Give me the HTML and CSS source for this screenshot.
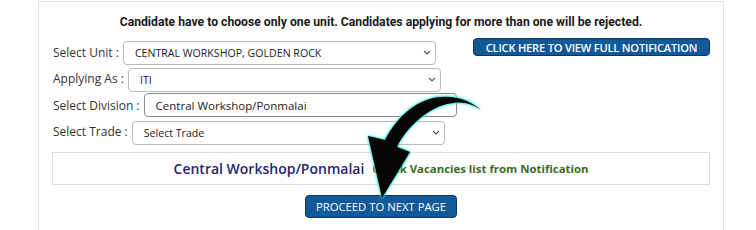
FILE: index.html
```html
<!DOCTYPE html>
<html lang="en">
<head>
    <meta charset="UTF-8">
    <meta name="viewport" content="width=device-width, initial-scale=1.0">
    <title>Apprentice Application - Unit Selection</title>
    <link rel="stylesheet" href="styles.css">
</head>
<body>
    <div class="card">
        <p class="warn">Candidate have to choose only one unit. Candidates applying for more than one will be rejected.</p>

        <div class="top">
            <div class="fields">
                <div class="row">
                    <label for="unit">Select Unit :</label>
                    <span class="sel">
                        <select id="unit" class="ctl">
                            <option>CENTRAL WORKSHOP, GOLDEN ROCK</option>
                        </select>
                        <svg class="chev" viewBox="0 0 8 5" width="8" height="5"><path d="M1 1 L4 4 L7 1" /></svg>
                    </span>
                </div>
                <div class="row">
                    <label for="applying">Applying As :</label>
                    <span class="sel">
                        <select id="applying" class="ctl">
                            <option>ITI</option>
                        </select>
                        <svg class="chev" viewBox="0 0 8 5" width="8" height="5"><path d="M1 1 L4 4 L7 1" /></svg>
                    </span>
                </div>
                <div class="row">
                    <label for="division">Select Division :</label>
                    <input id="division" class="ctl ctl-text" type="text" value="Central Workshop/Ponmalai">
                </div>
                <div class="row">
                    <label for="trade">Select Trade :</label>
                    <span class="sel">
                        <select id="trade" class="ctl">
                            <option>Select Trade</option>
                        </select>
                        <svg class="chev" viewBox="0 0 8 5" width="8" height="5"><path d="M1 1 L4 4 L7 1" /></svg>
                    </span>
                </div>
            </div>
            <a href="#" class="btn btn-note">CLICK HERE TO VIEW FULL NOTIFICATION</a>
        </div>

        <div class="info">
            <span class="unit-name">Central Workshop/Ponmalai</span>
            <span class="hint">Check Vacancies list from Notification</span>
        </div>

        <div class="actions">
            <button class="btn btn-next">PROCEED TO NEXT PAGE</button>
        </div>

        <!-- curved pointer drawn over the form -->
        <svg class="pointer" viewBox="360 90 130 115" width="130" height="115">
            <path d="M481,110 C465,95 436,91 413,107 C400,116 391,128 385,140
                     L368,136 L382,198 L410,152 L397,147
                     C405,130 424,110 447,104 C462,100 473,104 481,110 Z" fill="#050505"/>
        </svg>
    </div>
</body>
</html>
```

FILE: styles.css
```css
body {
    margin: 0;
    background-color: #ffffff;
    font-family: "Open Sans", "Noto Sans", sans-serif;
    color: #333333;
}

.card {
    position: relative;
    box-sizing: border-box;
    width: 686px;
    height: 240px;
    margin: 1px 0 0 38px;
    padding: 0 13px;
    border: 1px solid #e2e2e2;
    border-bottom: none;
}

.warn {
    margin: 12px 0 0;
    text-align: center;
    font-family: Roboto, "Liberation Sans", sans-serif;
    font-weight: bold;
    font-size: 12.2px;
    line-height: 16px;
    color: #1a1a1a;
}

.top {
    display: flex;
    justify-content: space-between;
    align-items: flex-start;
    margin-top: 8px;
}

.fields {
    display: flex;
    flex-direction: column;
    gap: 2.67px;
    padding-top: 2px;
    padding-left: 1px;
}

.row {
    display: flex;
    align-items: center;
    height: 24px;
}

.row label {
    font-size: 12px;
    color: #333333;
    margin-right: 4px;
    white-space: nowrap;
}

.sel {
    position: relative;
    display: inline-block;
    height: 24px;
}

.chev {
    position: absolute;
    right: 5px;
    top: 10px;
    fill: none;
    stroke: #555555;
    stroke-width: 1.1;
}

.ctl {
    box-sizing: border-box;
    width: 313px;
    height: 24px;
    padding: 0 11px;
    border: 1px solid #b9b9b9;
    border-radius: 4px;
    background-color: #ffffff;
    font-family: "Open Sans", "Noto Sans", sans-serif;
    font-size: 10.6px;
    color: #222222;
    appearance: none;
    -webkit-appearance: none;
    outline: none;
}

.ctl-text {
    border-color: #8a8a8a;
    font-size: 11.5px;
    padding-left: 11px;
}

.btn {
    box-sizing: border-box;
    display: inline-flex;
    justify-content: center;
    align-items: center;
    background-color: #12599a;
    border: 1px solid #0a355f;
    border-radius: 4px;
    color: #ffffff;
    font-family: "Open Sans", "Noto Sans", sans-serif;
    font-weight: 500;
    text-decoration: none;
    white-space: nowrap;
}

.btn-note {
    width: 237px;
    height: 18px;
    font-size: 11.1px;
    font-weight: 600;
    letter-spacing: -0.2px;
}

.info {
    display: flex;
    justify-content: center;
    align-items: center;
    gap: 8px;
    height: 33px;
    margin-top: 8px;
    border: 1px solid #dddddd;
    box-sizing: border-box;
}

.unit-name {
    font-size: 14px;
    font-weight: 600;
    color: #29246f;
}

.hint {
    font-size: 11.4px;
    font-weight: 700;
    color: #3b6a1f;
}

.actions {
    display: flex;
    justify-content: center;
    margin-top: 10px;
}

.btn-next {
    width: 152px;
    height: 23px;
    font-size: 11.3px;
    padding: 0;
}

.pointer {
    position: absolute;
    left: 321px;
    top: 88px;
    pointer-events: none;
    overflow: visible;
    filter: drop-shadow(0 0 1px #2ee6d6) drop-shadow(0 0 1.5px #2ee6d6);
}
```
